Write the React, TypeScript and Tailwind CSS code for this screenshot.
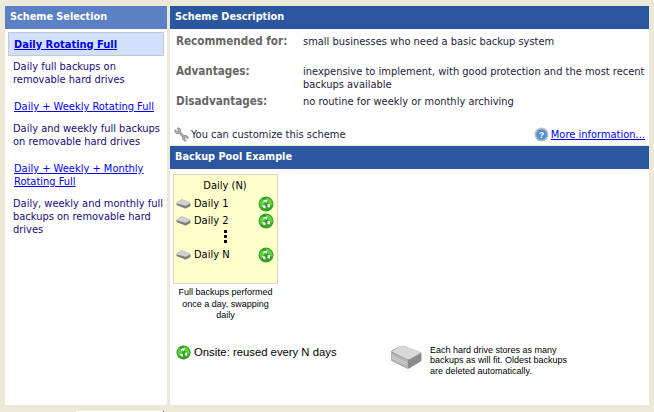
import React from 'react';

function Recycle({ size = 16 }: { size?: number }) {
  return (
    <svg width={size} height={size} viewBox="0 0 16 16" className="shrink-0">
      <circle cx="8" cy="8" r="7.5" fill="#35a024" />
      <path d="M8 1.5 A6.5 6.5 0 0 1 14 10 L10.5 8 Z" fill="#5fcf3f" />
      <path d="M3 12 A6.5 6.5 0 0 1 4 3 L7 7 Z" fill="#5fcf3f" />
      <path d="M5.5 4 L9.5 3.5 L8.5 7 L7 5.5 L5.5 7 Z" fill="#fff" />
      <path d="M12 8 L12 11.5 L9 11 L10 9.5 L9 8.5 Z" fill="#fff" />
      <path d="M4 9.5 L6.5 9 L7.5 10.5 L7.5 12.5 L5.5 12 Z" fill="#fff" />
    </svg>
  );
}

function Drive() {
  return (
    <svg width="15" height="10" viewBox="0 0 15 10" className="shrink-0">
      <path d="M0.5 4 Q1 3 2 2.5 L5 0.8 Q6 0.3 7 0.7 L13.5 3.5 Q14.5 4 14.5 5 L14.5 6.5 Q14.5 7 14 7.3 L10.5 9.2 Q9.5 9.7 8.5 9.3 L1 6.2 Q0.5 6 0.5 5.5 Z" fill="#7e7e7e" />
      <path d="M0.5 4 Q1 3 2 2.5 L5 0.8 Q6 0.3 7 0.7 L13.5 3.5 Q14.5 4 13.5 4.7 L10.5 6.5 Q9.5 7 8.5 6.6 L1 4.6 Z" fill="#d0d0d0" />
    </svg>
  );
}

function BigDrive() {
  return (
    <svg width="32" height="24" viewBox="0 0 32 24" className="shrink-0">
      <path d="M1 7 Q1 5.5 2.5 5 L11 1 Q12.5 0.5 14 1 L30 7 Q31.5 7.5 31.5 9 L31.5 15 Q31.5 16 30.5 16.5 L20 23 Q18.5 24 17 23.5 L2 16 Q1 15.5 1 14.5 Z" fill="#8c8c8c" />
      <path d="M1.5 6.5 L11 1 Q12.5 0.5 14 1 L30 7 Q31 7.5 30 8.5 L20 14 Q18.5 14.5 17 14 Z" fill="#d8d8d8" />
      <path d="M1 7 L18 14.5 L18 23.5 L2 16 Q1 15.5 1 14.5 Z" fill="#b4b4b4" />
      <path d="M2 11 L17 18 M2 13 L17 20" stroke="#e2e2e2" strokeWidth="0.7" />
    </svg>
  );
}

function Wrench() {
  return (
    <svg width="15" height="15" viewBox="0 0 15 15" className="shrink-0">
      <path d="M1 2.5 L3 4.5 L4.5 3.5 L3 1 L5 0.8 L6.8 2.5 L6.5 5 L10 8.5 L12.5 8.2 L14.3 10 L14 12 L11.8 10.5 L10.5 11.8 L12.5 14 L10.5 14 L8.5 12.2 L8.5 10 L5 6.5 L2.5 6.7 L0.8 5 Z" fill="#a5a5a5" stroke="#737373" strokeWidth="0.5" />
    </svg>
  );
}

function Help() {
  return (
    <svg width="15" height="15" viewBox="0 0 15 15" className="shrink-0">
      <circle cx="7.5" cy="7.5" r="7" fill="#b9bec6" />
      <circle cx="7.5" cy="7.5" r="5.3" fill="#4f8fd6" />
      <text x="7.5" y="11" fontSize="9" fontWeight="700" textAnchor="middle" fill="#fff" fontFamily="Liberation Sans, sans-serif">?</text>
    </svg>
  );
}

const schemes = [
  { title: 'Daily + Weekly Rotating Full', desc: 'Daily and weekly full backups on removable hard drives' },
  { title: 'Daily + Weekly + Monthly Rotating Full', desc: 'Daily, weekly and monthly full backups on removable hard drives' },
];

const rows = [
  { label: 'Recommended for:', text: 'small businesses who need a basic backup system' },
  { label: 'Advantages:', text: 'inexpensive to implement, with good protection and the most recent backups available' },
  { label: 'Disadvantages:', text: 'no routine for weekly or monthly archiving' },
];

function Header({ children, light }: { children: React.ReactNode; light?: boolean }) {
  return (
    <div className={`h-[23px] flex items-center pb-[2px] px-[5px] text-white font-bold text-[10.8px] ${light ? 'bg-[#5b81c4]' : 'bg-[#2b579e]'}`}>
      {children}
    </div>
  );
}

export default function App() {
  return (
    <div className="relative w-[654px] h-[412px] overflow-hidden bg-[#ece9d8] pt-[6px] pb-[7px] pl-[5px] pr-[5px] flex gap-[3px] text-[11px] leading-[13px] text-black font-['DejaVu_Sans_Condensed','DejaVu_Sans',sans-serif]">
      <div className="w-[162px] shrink-0 bg-white flex flex-col">
        <Header light>Scheme Selection</Header>
        <div className="px-[3px] pt-[3px]">
          <div className="h-[24px] bg-[#d3e0fb] border border-[#c3c7d0] px-[5px] flex items-center font-bold text-[#0000ee] underline">Daily Rotating Full</div>
          <p className="pl-[5px] mt-[4px] text-[#1a0a78]">Daily full backups on<br />removable hard drives</p>
          {schemes.map((s) => (
            <div key={s.title} className="mt-[14px] pl-[6px]">
              <a className="text-[#0000ee] underline block">{s.title}</a>
              <p className="text-[#1a0a78] mt-[9px] -ml-[1px]">{s.desc}</p>
            </div>
          ))}
        </div>
      </div>
      <div className="flex-1 min-w-0 flex flex-col bg-white">
        <Header>Scheme Description</Header>
        <div className="h-[116px] flex flex-col px-[6px] pt-[6px]">
          {rows.map((r) => (
            <div key={r.label} className="flex h-[30px]">
              <div className="w-[127px] shrink-0 font-bold text-[11.6px] text-[#666]">{r.label}</div>
              <div className="w-[345px] shrink-0 text-[#1c1c3a]">{r.text}</div>
            </div>
          ))}
          <div className="mt-auto mb-[3px] flex items-center justify-between -mr-[2px] -ml-[2px]">
            <div className="flex items-center gap-[2px] text-[#1c1c3a]"><Wrench /> You can customize this scheme</div>
            <div className="flex items-center gap-[2px]"><Help /><a className="text-[#0000ee] underline">More information...</a></div>
          </div>
        </div>
        <div className="h-[1px] bg-[#ece9d8]" />
        <Header>Backup Pool Example</Header>
        <div className="flex-1 px-[3px] pt-[5px]">
          <div className="w-[105px]">
            <div className="h-[110px] bg-[#ffffcc] border border-[#d9d9c0] pl-[2px] pr-[3px] pt-[4px]">
              <div className="text-center">Daily (N)</div>
              <div className="mt-[3px] flex items-center h-[17px] gap-[3px]"><Drive /><span className="flex-1">Daily 1</span><Recycle /></div>
              <div className="flex items-center h-[17px] gap-[3px]"><Drive /><span className="flex-1">Daily 2</span><Recycle /></div>
              <div className="flex flex-col items-center gap-[2px] mt-[1px] pb-[3px]">
                <i className="w-[3px] h-[3px] bg-black" /><i className="w-[3px] h-[3px] bg-black" /><i className="w-[3px] h-[3px] bg-black" />
              </div>
              <div className="flex items-center h-[17px] gap-[3px]"><Drive /><span className="flex-1">Daily N</span><Recycle /></div>
            </div>
            <div className="mt-[3px] text-center text-[9px] leading-[11.5px] font-['Liberation_Sans',sans-serif]">Full backups performed once a day, swapping daily</div>
          </div>
          <div className="mt-[23px] flex items-start">
            <div className="w-[217px] flex items-center gap-[3px] pl-[3px] text-[11.3px] font-['Liberation_Sans',sans-serif]"><Recycle size={15} /> Onsite: reused every N days</div>
            <div className="flex gap-[8px]">
              <BigDrive />
              <div className="text-[9px] leading-[10.5px] w-[145px] font-['Liberation_Sans',sans-serif]">Each hard drive stores as many backups as will fit. Oldest backups are deleted automatically.</div>
            </div>
          </div>
        </div>
      </div>
      <div className="absolute left-[76px] bottom-0 w-[88px] h-[1px] bg-white border-r border-[#444]" />
    </div>
  );
}
